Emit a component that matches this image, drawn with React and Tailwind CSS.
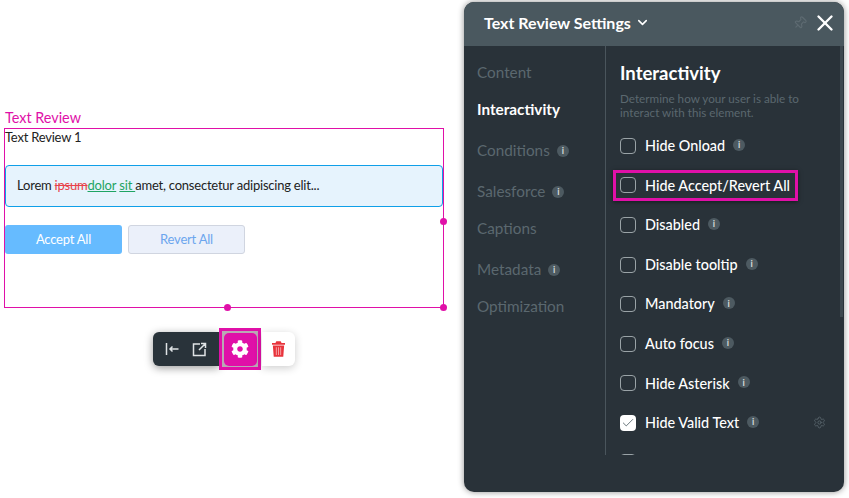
import React from "react";
import { Check, ChevronDown, Pin, Settings, X } from "lucide-react";
import { FaCog } from "react-icons/fa";

const font = "font-['Lato','Noto_Sans',sans-serif]";

const InfoDot = () => (
  <span className="inline-flex items-center justify-center w-[12px] h-[12px] rounded-full bg-[#4d5a61] text-[#d5dadc] text-[9px] font-bold leading-none">
    i
  </span>
);

const NavItem = ({ label, info, active }) => (
  <div className={"flex items-center gap-[7px] text-[15.3px] " + (info ? "h-[41px] pt-[4px] " : "h-[37px] ") + (active ? "text-white font-bold" : "text-[#5b686f]")}>
    <span>{label}</span>
    {info && <InfoDot />}
  </div>
);

const OptionRow = ({ label, info = true, checked, highlight, gear }) => (
  <div className="relative shrink-0 h-[39.6px] flex items-center">
    {highlight && (
      <div className="absolute left-[-7px] top-[4px] w-[185px] h-[31px] border-[3px] border-[#e010a8] shadow-[0_1px_4px_rgba(0,0,0,0.5)]" />
    )}
    <span
      className={
        "w-[16px] h-[16px] rounded-[4px] flex items-center justify-center shrink-0 " +
        (checked ? "bg-white" : "border border-[#9aa3a7]")
      }
    >
      {checked && <Check size={14} strokeWidth={1.5} className="text-[#55636a]" />}
    </span>
    <span className="ml-[9px] text-[14.4px] text-white font-medium">{label}</span>
    {info && (
      <span className="ml-[8px] -mt-[2px] flex">
        <InfoDot />
      </span>
    )}
    {gear && <Settings size={13} strokeWidth={1.5} className="absolute right-[5px] text-[#5b686f]" />}
  </div>
);

const Canvas = () => (
  <div className="w-[464px] shrink-0 pl-[4px] pt-[109px]">
    <div className="text-[14.4px] leading-[17px] pl-[1px] text-[#e010a8] h-[19px]">Text Review</div>
    <div className="relative w-[440px] h-[180px] border border-[#e010a8]">
      <div className="text-[13px] tracking-[-0.22px] leading-[16px] text-[#222]">Text Review 1</div>
      <div className="mt-[20px] h-[42px] flex items-center pl-[11px] border border-[#0f9fe8] rounded-[4px] bg-[#e6f3fd] text-[13px] tracking-[-0.22px] text-[#222]">
        Lorem&nbsp;
        <span className="text-[#e8434b] line-through">ipsum</span>
        <span className="text-[#1fa463] underline">dolor</span>
        &nbsp;
        <span className="text-[#1fa463] underline">sit&nbsp;</span>
        amet, consectetur adipiscing elit...
      </div>
      <div className="mt-[18px] flex gap-[6px]">
        <div className="w-[117px] h-[29px] rounded-[3px] bg-[#66bbff] text-white text-[13px] tracking-[-0.22px] flex items-center justify-center">
          Accept All
        </div>
        <div className="w-[117px] h-[29px] rounded-[3px] bg-[#ebf0fa] border border-[#d0d5e0] text-[#6ba6ee] text-[13px] tracking-[-0.22px] flex items-center justify-center">
          Revert All
        </div>
      </div>
      <span className="absolute right-[-4px] top-[89px] w-[7px] h-[7px] rounded-full bg-[#e010a8]" />
      <span className="absolute left-[219px] bottom-[-4px] w-[7px] h-[7px] rounded-full bg-[#e010a8]" />
      <span className="absolute right-[-4px] bottom-[-4px] w-[7px] h-[7px] rounded-full bg-[#e010a8]" />
    </div>
    <div className="mt-[20px] ml-[149px] flex items-center">
      <div className="w-[66px] h-[34px] rounded-l-[6px] bg-[#29333a] flex items-center justify-center gap-[13px] shadow-[0_2px_8px_rgba(0,0,0,0.4)]">
        <svg width="14" height="14" viewBox="0 0 14 14" fill="none" stroke="#dfe3e5" strokeWidth="1.5">
          <path d="M1.500 1v12M13.500 7H5M7.500 4.500 5 7l2.500 2.500" />
        </svg>
        <svg width="15" height="15" viewBox="0 0 15 15" fill="none" stroke="#dfe3e5" strokeWidth="1.5">
          <path d="M8 2H1.500v11.500H13V7M9 1.500h4.500V6M13.500 1.500 7 8" />
        </svg>
      </div>
      <div className="w-[42px] h-[42px] border-[3px] border-[#e010a8] bg-[#b9a9b4] flex items-center justify-center">
        <div className="w-[33px] h-[33px] rounded-[5px] bg-[#e010a8] flex items-center justify-center">
          <FaCog size={18} className="text-white" />
        </div>
      </div>
      <div className="ml-[1px] w-[33px] h-[34px] rounded-r-[6px] bg-white flex items-center justify-center shadow-[0_2px_8px_rgba(0,0,0,0.2)]">
        <svg width="13" height="18" viewBox="0 0 15 18" fill="#e8343c">
          <path d="M5 0h5l1 2h4v2H0V2h4zM1 5h13l-1 13H2z" />
          <path d="M5 7v9M7.500 7v9M10 7v9" stroke="#f9b0b3" strokeWidth="1" />
        </svg>
      </div>
    </div>
  </div>
);

const SettingsPanel = () => (
  <div className="mt-[2px] w-[380px] h-[490px] rounded-[10px] overflow-hidden bg-[#293239] shadow-[0_0_6px_rgba(0,0,0,0.45)] flex flex-col">
    <div className="h-[44px] shrink-0 bg-[#4a585f] flex items-center pl-[20px] pr-[6px] pb-[3px]">
      <span className="text-[16px] font-bold text-white">Text Review Settings</span>
      <ChevronDown size={15} strokeWidth={2.5} className="ml-[4px] text-white" />
      <Pin size={14} className="ml-auto rotate-45 text-[#5d6a71]" />
      <X size={26} strokeWidth={2.2} className="ml-[5px] text-white" />
    </div>
    <div className="relative flex h-[409px]">
      <div className="w-[142px] shrink-0 pl-[13px] pt-[8px] border-r border-[#4a555c]">
        <NavItem label="Content" />
        <NavItem label="Interactivity" active />
        <NavItem label="Conditions" info />
        <NavItem label="Salesforce" info />
        <NavItem label="Captions" />
        <NavItem label="Metadata" info />
        <NavItem label="Optimization" />
      </div>
      <div className="pl-[14px] w-[225px] overflow-hidden flex flex-col">
        <div className="mt-[14px] text-[18.5px] leading-[26px] font-bold text-white">Interactivity</div>
        <div className="mt-[5px] text-[11.7px] leading-[14px] text-[#5b686f]">
          Determine how your user is able to
          <br />
          interact with this element.
        </div>
        <div className="mt-[7px] flex flex-col">
          <OptionRow label="Hide Onload" />
          <OptionRow label="Hide Accept/Revert All" info={false} highlight />
          <OptionRow label="Disabled" />
          <OptionRow label="Disable tooltip" />
          <OptionRow label="Mandatory" />
          <OptionRow label="Auto focus" />
          <OptionRow label="Hide Asterisk" />
          <OptionRow label="Hide Valid Text" checked gear />
          <div className="-mt-[1px]">
            <OptionRow label="" info={false} />
          </div>
        </div>
      </div>
      <div className="absolute right-[1px] top-0 w-[3px] h-[271px] bg-[#3d484f]" />
    </div>
  </div>
);

export default function App() {
  return (
    <div className={"w-[849px] h-[498px] overflow-hidden bg-white flex " + font}>
      <Canvas />
      <SettingsPanel />
    </div>
  );
}
